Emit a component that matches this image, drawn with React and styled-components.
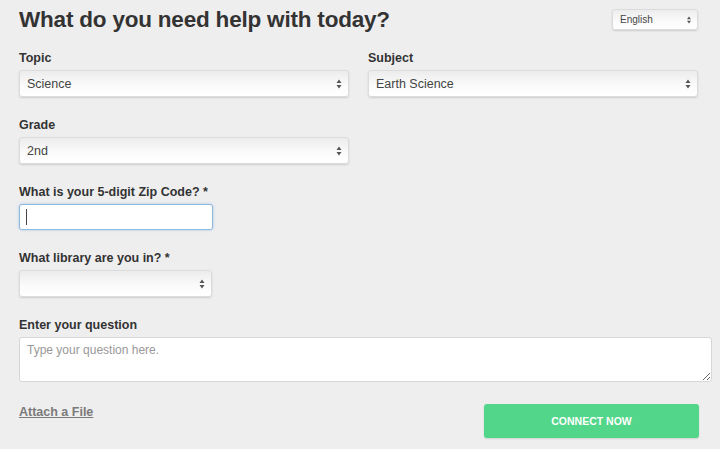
import styled, { createGlobalStyle } from "styled-components";

const GlobalStyle = createGlobalStyle`
  html, body {
    margin: 0;
    padding: 0;
    background: #efeeef;
    font-family: "Liberation Sans", Arial, sans-serif;
    color: #333;
  }
`;

const Arrows = () => (
  <svg width="6" height="10" viewBox="0 0 6 10">
    <path d="M3 0.5 L5.5 4 L0.5 4 Z" fill="#555" />
    <path d="M3 9.5 L5.5 6 L0.5 6 Z" fill="#555" />
  </svg>
);

const Select = ({ value, width, small }) => (
  <SelectBox width={width} small={small}>
    <span>{value}</span>
    <Arrows />
  </SelectBox>
);

const App = () => {
  return (
    <Page>
      <GlobalStyle />
      <Header>
        <Title>What do you need help with today?</Title>
        <Select value="English" width="86px" small />
      </Header>

      <Row>
        <Field>
          <Label>Topic</Label>
          <Select value="Science" />
        </Field>
        <Field>
          <Label>Subject</Label>
          <Select value="Earth Science" />
        </Field>
      </Row>

      <Row>
        <Field>
          <Label>Grade</Label>
          <Select value="2nd" />
        </Field>
        <div />
      </Row>

      <Field>
        <Label>What is your 5-digit Zip Code? *</Label>
        <ZipBox>
          <Caret />
        </ZipBox>
      </Field>

      <Field>
        <Label>What library are you in? *</Label>
        <Select value="" width="193px" />
      </Field>

      <Field>
        <Label>Enter your question</Label>
        <Question placeholder="Type your question here." />
      </Field>

      <Footer>
        <Attach href="#">Attach a File</Attach>
        <Connect>CONNECT NOW</Connect>
      </Footer>
    </Page>
  );
};

export default App;

const Page = styled.div`
  width: 720px;
  height: 449px;
  box-sizing: border-box;
  padding: 8px 9px 0 19px;
  display: flex;
  flex-direction: column;
  gap: 21px;
  overflow: hidden;
`;

const Header = styled.div`
  display: flex;
  align-items: center;
  justify-content: space-between;
  width: 679px;
  height: 23px;
  margin-bottom: -1px;
`;

const Title = styled.h1`
  margin: 0;
  font-size: 22.5px;
  font-weight: 700;
  color: #333;
  letter-spacing: -0.2px;
`;

const Row = styled.div`
  display: grid;
  grid-template-columns: 330px 330px;
  column-gap: 19px;
`;

const Field = styled.div`
  display: flex;
  flex-direction: column;
  gap: 4px;
`;

const Label = styled.label`
  font-size: 12.5px;
  font-weight: 700;
  color: #333;
  line-height: 15px;
`;

const SelectBox = styled.div`
  width: ${(p) => p.width || "100%"};
  height: ${(p) => (p.small ? "21px" : "27px")};
  box-sizing: border-box;
  display: flex;
  align-items: center;
  justify-content: space-between;
  padding: ${(p) => (p.small ? "0 5px 0 7px" : "0 6px 0 7px")};
  border: 1px solid #dcdcdc;
  border-radius: 3px;
  background: linear-gradient(#ececec, #fbfbfb 60%, #ffffff);
  box-shadow: 0 1px 2px rgba(0, 0, 0, 0.14);
  font-size: ${(p) => (p.small ? "10px" : "12.5px")};
  color: #444;

  svg {
    flex-shrink: 0;
    transform: ${(p) => (p.small ? "scale(0.8)" : "none")};
  }
`;

const ZipBox = styled.div`
  width: 194px;
  height: 26px;
  box-sizing: border-box;
  display: flex;
  align-items: center;
  border: 1px solid #8fb9de;
  border-radius: 3px;
  background: #fff;
  box-shadow: 0 0 3px rgba(100, 160, 220, 0.5);
  padding: 0 6px;
`;

const Caret = styled.span`
  width: 1px;
  height: 16px;
  background: #444;
`;

const Question = styled.textarea`
  width: 693px;
  height: 45px;
  box-sizing: border-box;
  border: 1px solid #d6d6d6;
  border-radius: 3px;
  background: #fff;
  padding: 5px 7px;
  font-family: "Liberation Sans", Arial, sans-serif;
  font-size: 12px;
  color: #444;
  resize: vertical;
  outline: none;

  &::placeholder {
    color: #999;
  }
`;

const Footer = styled.div`
  display: flex;
  align-items: center;
  justify-content: space-between;
  width: 680px;
  margin-top: 1px;
`;

const Attach = styled.a`
  font-size: 12.5px;
  font-weight: 700;
  color: #7a7a7a;
  text-decoration: underline;
  align-self: flex-start;
  margin-top: 1px;
`;

const Connect = styled.button`
  width: 215px;
  height: 34px;
  border: none;
  border-radius: 3px;
  background: #52d689;
  color: #fff;
  font-family: "Liberation Sans", Arial, sans-serif;
  font-size: 10.5px;
  font-weight: 700;
  box-shadow: 0 1px 2px rgba(0, 0, 0, 0.12);
  cursor: pointer;
`;
